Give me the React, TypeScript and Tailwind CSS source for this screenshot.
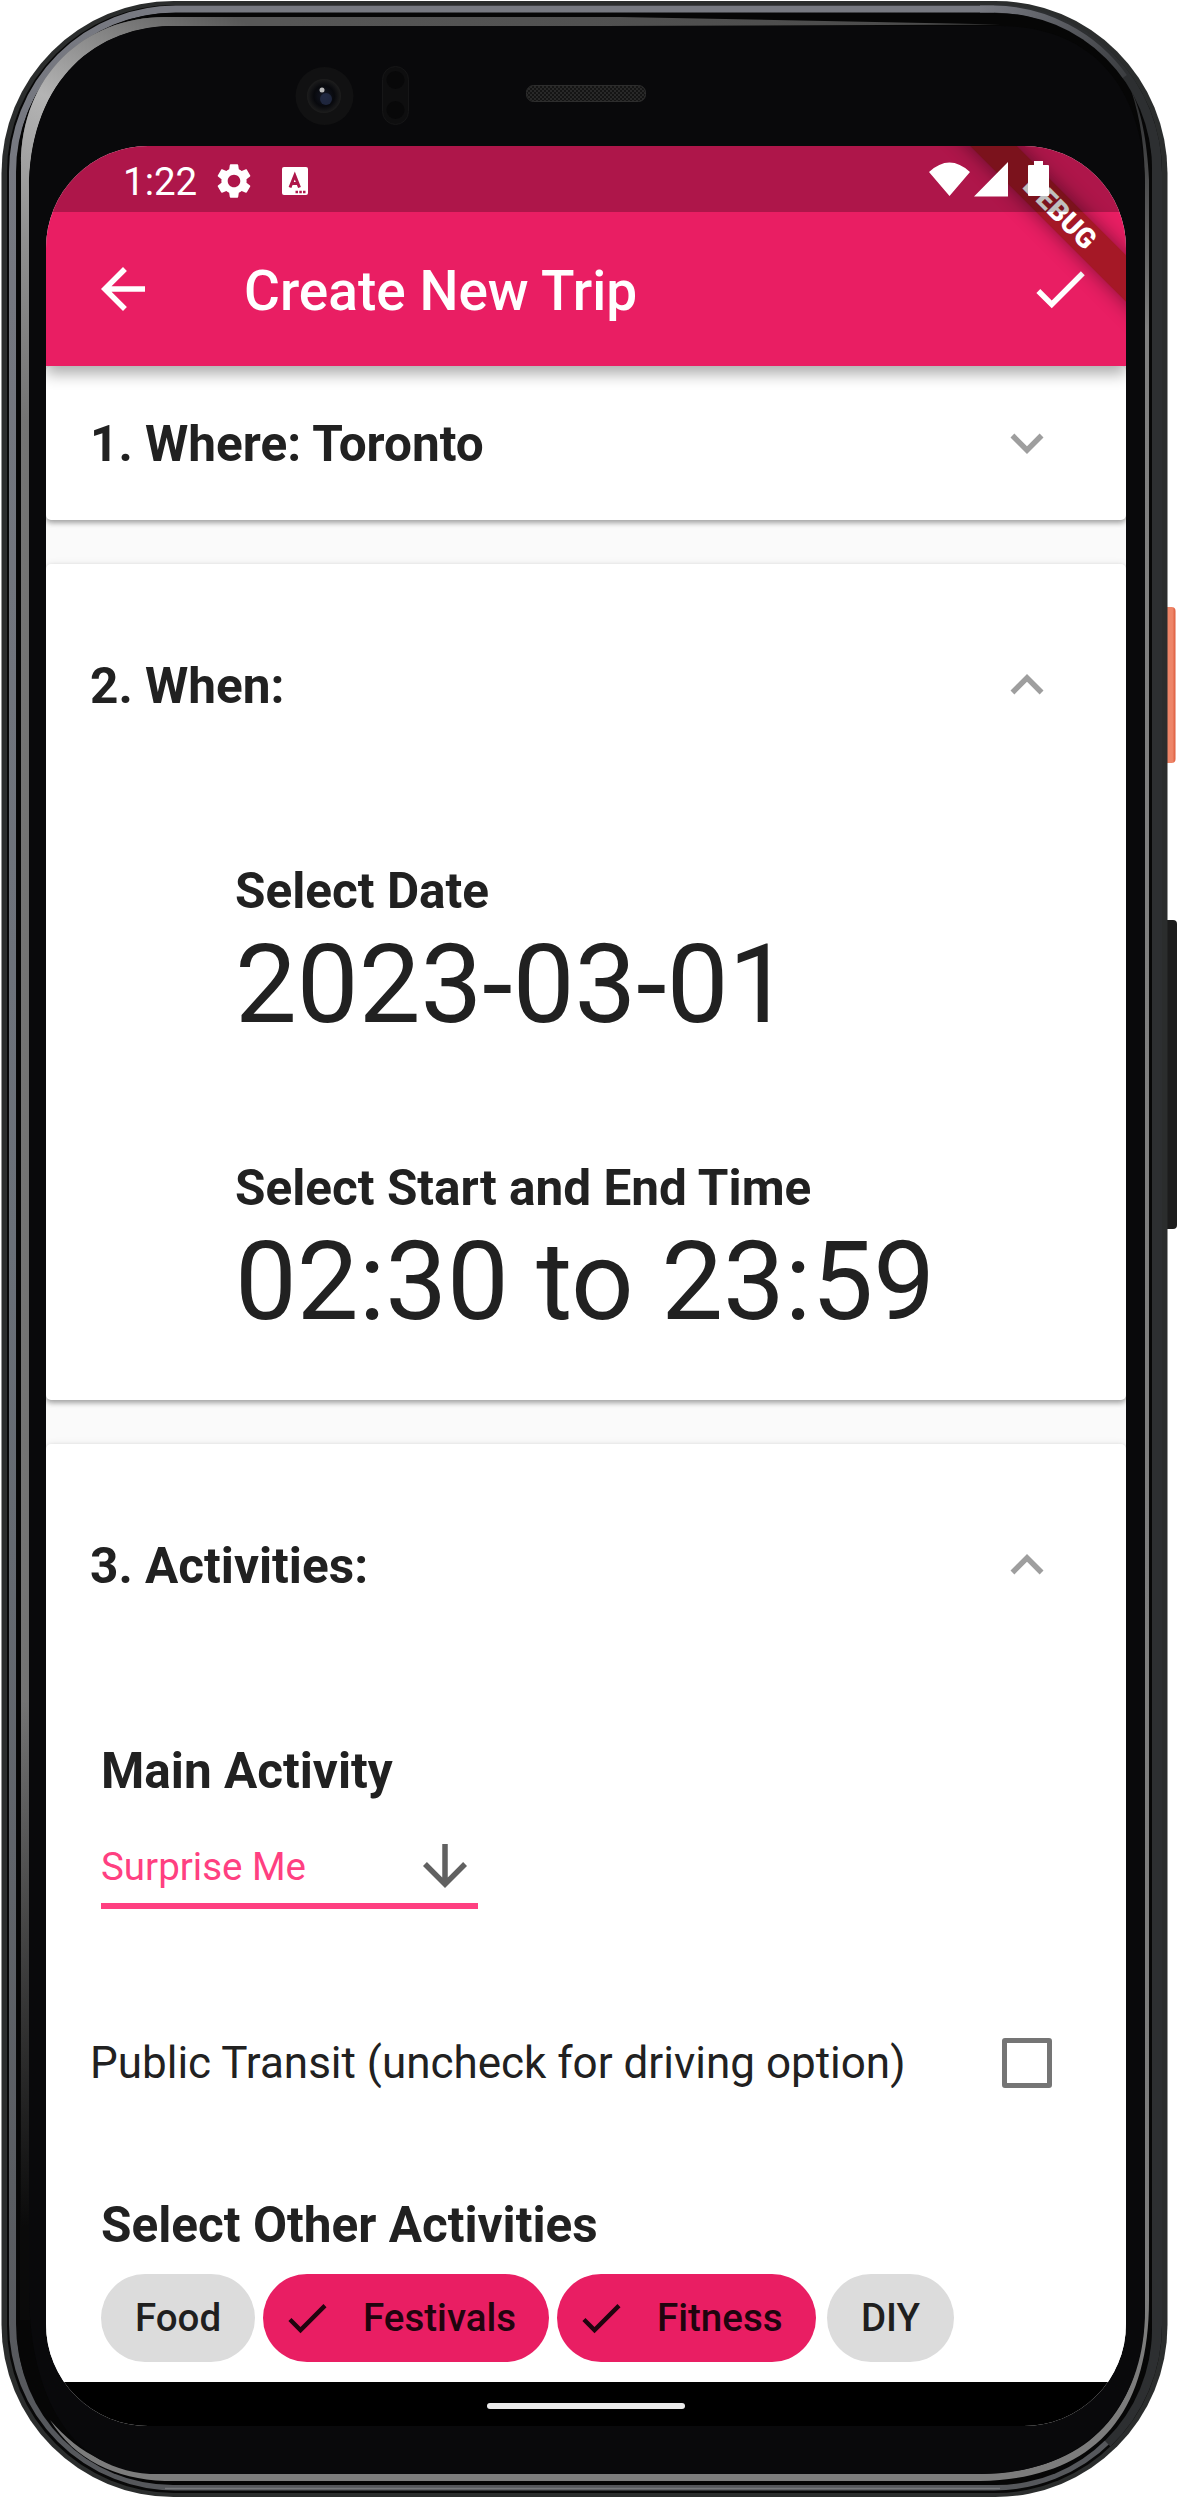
import type { ReactNode } from "react";

const CHECK = "M9 16.17 4.83 12l-1.42 1.41L9 19 21 7l-1.41-1.41z";
const ARROW_BACK = "M20 11H7.83l5.59-5.59L12 4l-8 8 8 8 1.41-1.41L7.83 13H20v-2z";
const ARROW_DOWN = "M20 12l-1.41-1.41L13 16.17V4h-2v12.17l-5.58-5.59L4 12l8 8 8-8z";
const EXPAND_MORE = "M16.59 8.59 12 13.17 7.41 8.59 6 10l6 6 6-6z";
const EXPAND_LESS = "M12 8l-6 6 1.41 1.41L12 10.83l4.59 4.58L18 14z";
const SETTINGS =
  "M19.14 12.94c.04-.3.06-.61.06-.94 0-.32-.02-.64-.07-.94l2.03-1.58c.18-.14.23-.41.12-.61l-1.92-3.32c-.12-.22-.37-.29-.59-.22l-2.39.96c-.5-.38-1.03-.7-1.62-.94l-.36-2.54c-.04-.24-.24-.41-.48-.41h-3.84c-.24 0-.43.17-.47.41l-.36 2.54c-.59.24-1.13.57-1.62.94l-2.39-.96c-.22-.08-.47 0-.59.22L2.74 8.87c-.12.21-.08.47.12.61l2.03 1.58c-.05.3-.09.63-.09.94s.02.64.07.94l-2.03 1.58c-.18.14-.23.41-.12.61l1.92 3.32c.12.22.37.29.59.22l2.39-.96c.5.38 1.03.7 1.62.94l.36 2.54c.05.24.24.41.48.41h3.84c.24 0 .44-.17.47-.41l.36-2.54c.59-.24 1.13-.56 1.62-.94l2.39.96c.22.08.47 0 .59-.22l1.92-3.32c.12-.22.07-.47-.12-.61l-2.01-1.58zM12 15.6c-1.98 0-3.6-1.62-3.6-3.6s1.62-3.6 3.6-3.6 3.6 1.62 3.6 3.6-1.62 3.6-3.6 3.6z";

function Icon({ d, className }: { d: string; className: string }) {
  return (
    <svg viewBox="0 0 24 24" fill="currentColor" className={className}>
      <path d={d} />
    </svg>
  );
}

function PhoneBody() {
  return (
    <svg viewBox="0 0 1178 2498" className="absolute inset-0 h-full w-full">
      <defs>
        <linearGradient id="power" x1="0" x2="1" y1="0" y2="0">
          <stop offset="0" stopColor="#c8583e" />
          <stop offset="0.4" stopColor="#ee8568" />
          <stop offset="0.8" stopColor="#ee8568" />
          <stop offset="1" stopColor="#dc5b3c" />
        </linearGradient>
        <linearGradient id="rim" x1="0" x2="1" y1="0" y2="0">
          <stop offset="0" stopColor="#747474" />
          <stop offset="0.15" stopColor="#585858" />
          <stop offset="1" stopColor="#4a4a4a" />
        </linearGradient>
        <linearGradient id="shine" gradientUnits="userSpaceOnUse" x1="25" x2="240" y1="420" y2="20">
          <stop offset="0" stopColor="#747474" />
          <stop offset="0.35" stopColor="#8f8f8f" />
          <stop offset="0.65" stopColor="#b4b4b4" />
          <stop offset="1" stopColor="#585858" />
        </linearGradient>
        <linearGradient id="fade" x1="0" x2="0" y1="0" y2="1">
          <stop offset="0" stopColor="#0a0a0a" stopOpacity="0" />
          <stop offset="0.85" stopColor="#0a0a0a" />
        </linearGradient>
        <linearGradient id="side" x1="0" x2="0" y1="0" y2="1">
          <stop offset="0" stopColor="#2b2c2e" />
          <stop offset="0.1" stopColor="#808080" />
          <stop offset="1" stopColor="#7c7c7c" />
        </linearGradient>
        <linearGradient id="metal" x1="0" x2="0" y1="0" y2="1">
          <stop offset="0" stopColor="#777981" />
          <stop offset="0.5" stopColor="#6a7078" />
          <stop offset="1" stopColor="#55575b" />
        </linearGradient>
        <linearGradient id="metalCorner" gradientUnits="userSpaceOnUse" x1="980" x2="1140" y1="9" y2="110">
          <stop offset="0" stopColor="#777981" />
          <stop offset="1" stopColor="#303234" />
        </linearGradient>
        <pattern id="mesh" width="4" height="4" patternUnits="userSpaceOnUse">
          <rect width="4" height="4" fill="#141414" />
          <circle cx="1" cy="1" r="0.8" fill="#404040" />
          <circle cx="3" cy="3" r="0.8" fill="#404040" />
        </pattern>
        <radialGradient id="lens">
          <stop offset="0" stopColor="#141826" />
          <stop offset="0.6" stopColor="#08090d" />
          <stop offset="1" stopColor="#1d1d1d" />
        </radialGradient>
      </defs>
      <rect x="1160" y="607" width="15.500" height="156" rx="4" fill="url(#power)" />
      <rect x="1160" y="920" width="17" height="309" rx="4" fill="#1c1c1c" />
      <rect x="1.500" y="1" width="1166" height="2496" rx="172" fill="#2b2d2d" />
      <rect x="7" y="5" width="1155" height="2488" rx="167" fill="#080808" />
      <rect x="12.500" y="9" width="1144.500" height="2478" rx="163" fill="none" stroke="url(#metal)" strokeWidth="7" />
      <path d="M994 9a163 163 0 0 1 163 163V2325a163 163 0 0 1-50 118" fill="none" stroke="#2d2f31" strokeWidth="10" />
      <path d="M980 9h14a163 163 0 0 1 130 68" fill="none" stroke="url(#metalCorner)" strokeWidth="7" />
      <rect x="17" y="13" width="1135" height="2472" rx="156" fill="#060606" />
      {/* Reflections on the inner rim */}
      <path d="M21 2300V165C21 75 85 17 165 17H620L1000 24.500 600 26H170C88 28 29 88 29 190V2300z" fill="url(#rim)" />
      <path d="M21 420V165C21 75 85 17 165 17H280V26H170C88 28 29 88 29 190V420z" fill="url(#shine)" />
      <rect x="20" y="1700" width="10" height="620" fill="url(#fade)" />
      <path
        d="M50 2420C75 2460 115 2479 165 2481H980C1090 2479 1149 2420 1149 2300V180C1147 140 1141 110 1131 90 1141 120 1145 150 1145 190V2300C1145 2410 1090 2472 980 2474H165C115 2472 80 2455 50 2420z"
        fill="url(#side)"
      />
      <path d="M29 2290V190C29 88 88 28 170 26H1000C1090 26 1145 85 1145 190V2310C1145 2410 1082 2474 980 2474H150C60 2468 29 2380 29 2290z" fill="#09090b" />
      <path d="M165 2488.500H1000" stroke="#77797c" strokeWidth="1.500" />
      {/* Front camera, sensor and earpiece */}
      <circle cx="324.500" cy="96" r="29" fill="#111112" />
      <circle cx="324" cy="96" r="17" fill="url(#lens)" />
      <circle cx="326" cy="99" r="6" fill="#27304f" opacity="0.7" />
      <circle cx="322" cy="90" r="2.500" fill="#b9b9b9" />
      <rect x="382.500" y="66.500" width="26" height="58" rx="13" fill="#0e0e0f" stroke="#161617" />
      <circle cx="395.500" cy="80" r="9" fill="#080809" />
      <circle cx="395.500" cy="110" r="9" fill="#080809" />
      <rect x="526.500" y="85.500" width="119" height="16" rx="7" fill="url(#mesh)" stroke="#2d2d2d" />
    </svg>
  );
}

function StatusBar() {
  return (
    <div className="relative flex h-[66px] items-center justify-between bg-black/25 pl-[77px] pr-[77px] text-white">
      <div className="flex items-center pt-[4px]">
        <span className="w-[90px] pt-[3px] text-[38.5px] leading-none">1:22</span>
        <Icon d={SETTINGS} className="size-[42px]" />
        <svg viewBox="0 0 26 28" className="ml-[27px] h-[28px] w-[26px]">
          <rect width="26" height="28" rx="2" fill="#fff" />
          <path d="M8 20.500 12.800 8.500l4.700 12M10 16.500h6" fill="none" stroke="#af164a" strokeWidth="3" />
          <path d="M13.500 25h2.500M17.300 25h2.500M21 25h2.500" stroke="#af164a" strokeWidth="2.300" />
        </svg>
      </div>
      <svg viewBox="0 0 120 36" className="h-[36px] w-[120px]">
        <path d="M0 11Q20.500-8 41 11L20.500 35zM79 1v34.500H45zM99 5q0-1 1-1h5V0h9v4h5q1 0 1 1v29q0 1-1 1h-19q-1 0-1-1z" fill="#fff" />
      </svg>
    </div>
  );
}

function DebugBanner() {
  return (
    <div className="absolute right-0 top-0 size-[220px] overflow-hidden">
      <div className="absolute left-[4px] top-[49.5px] flex h-[33px] w-[300px] rotate-45 items-center justify-center bg-[#a51826] text-[28px] font-black leading-none text-white shadow-[0_0_20px_rgba(0,0,0,0.45)]">
        DEBUG
      </div>
    </div>
  );
}

function SectionHeader({ title, open }: { title: string; open: boolean }) {
  return (
    <div className={`flex items-center justify-between pl-11 pr-[66px] ${open ? "h-[242px]" : "h-[154px]"}`}>
      <h2 className="pt-[3px] text-[49.5px] font-bold leading-none">{title}</h2>
      <Icon d={open ? EXPAND_LESS : EXPAND_MORE} className="size-[66px] text-[#9e9e9e]" />
    </div>
  );
}

function Card({ children, className }: { children: ReactNode; className: string }) {
  return (
    <section className={`shrink-0 rounded-[5px] bg-white shadow-[0_3px_5px_rgba(0,0,0,0.3),0_1px_8px_rgba(0,0,0,0.1)] ${className}`}>
      {children}
    </section>
  );
}

function Chip({ label, selected = false, className }: { label: string; selected?: boolean; className: string }) {
  return (
    <div className={`flex h-[88px] items-center rounded-full text-[38.5px] font-medium leading-none ${className}`}>
      {selected && <Icon d={CHECK} className="mr-[30px] size-[52px]" />}
      {label}
    </div>
  );
}

export default function App() {
  return (
    <div className="relative h-[2498px] w-[1178px] overflow-hidden bg-white font-['Roboto',sans-serif] text-[#212121]">
      <PhoneBody />
      <main className="relative ml-[46px] mt-[146px] flex h-[2280px] w-[1080px] flex-col overflow-hidden rounded-[102px] bg-[#fafafa]">
        <header className="relative z-10 shrink-0 bg-[#e91e63] shadow-[0_8px_14px_rgba(0,0,0,0.32)]">
          <DebugBanner />
          <StatusBar />
          <div className="flex h-[154px] items-center pl-11 pr-[33px] text-white">
            <Icon d={ARROW_BACK} className="size-[66px]" />
            <h1 className="ml-[88px] flex-1 pt-[4px] text-[55px] font-medium leading-none">Create New Trip</h1>
            <Icon d={CHECK} className="size-[66px]" />
          </div>
        </header>

        <div className="flex h-[2016px] shrink-0 flex-col gap-11 overflow-hidden">
          <Card className="h-[154px]">
            <SectionHeader title="1. Where: Toronto" open={false} />
          </Card>

          <Card className="h-[836px]">
            <SectionHeader title="2. When:" open />
            <div className="pl-[189px] pt-[56px]">
              <h3 className="text-[49.5px] font-bold leading-[58px]">Select Date</h3>
              <p className="text-[110px] leading-[129px]">2023-03-01</p>
              <h3 className="mt-[110px] text-[49.5px] font-bold leading-[58px]">Select Start and End Time</h3>
              <p className="text-[110px] leading-[129px]">02:30 to 23:59</p>
            </div>
          </Card>

          <Card className="h-[1000px]">
            <SectionHeader title="3. Activities:" open />
            <div className="flex flex-col pl-[55px] pt-[56px]">
              <h3 className="text-[49.5px] font-bold leading-[58px]">Main Activity</h3>
              <div className="mt-[28px] flex h-[81px] w-[377px] items-center justify-between border-b-[6px] border-[#ff4081] text-[#ff4081]">
                <span className="pt-[3px] text-[38.5px] leading-none">Surprise Me</span>
                <Icon d={ARROW_DOWN} className="size-[66px] text-[#616161]" />
              </div>
            </div>
            <div className="mt-[77px] flex h-[154px] items-center justify-between pl-11 pr-[74px]">
              <span className="text-[44px] leading-none">Public Transit (uncheck for driving option)</span>
              <span className="size-[50px] rounded-[3px] border-[5.5px] border-[#757575]" />
            </div>
            <div className="pl-[55px] pt-[56px]">
              <h3 className="text-[49.5px] font-bold leading-[58px]">Select Other Activities</h3>
              <div className="mt-[20px] flex">
                <Chip label="Food" className="w-[154px] justify-center bg-[#dcdcdc] text-[#1f1f1f]" />
                <Chip label="Festivals" selected className="ml-[8px] w-[286px] bg-[#e91e63] pl-[18px] text-[#20040e]" />
                <Chip label="Fitness" selected className="ml-[8px] w-[259px] bg-[#e91e63] pl-[18px] text-[#20040e]" />
                <Chip label="DIY" className="ml-[11px] w-[127px] justify-center bg-[#dcdcdc] text-[#1f1f1f]" />
              </div>
            </div>
          </Card>
        </div>

        <div className="flex h-11 shrink-0 items-center justify-center bg-black">
          <div className="mt-[4px] h-[6px] w-[198px] rounded-full bg-[#ebebeb]" />
        </div>
      </main>
    </div>
  );
}
